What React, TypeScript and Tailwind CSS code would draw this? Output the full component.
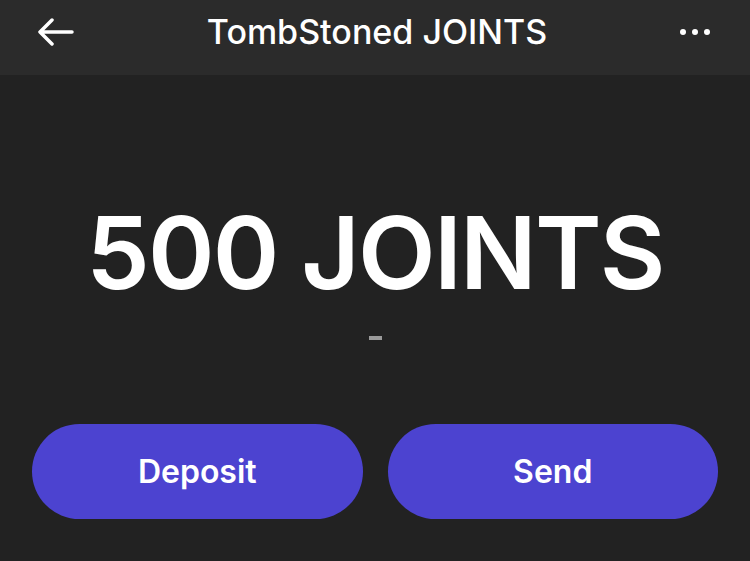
export default function App() {
  return (
    <div className="w-[750px] h-[561px] bg-[#222222] flex flex-col font-['Inter',sans-serif] text-white overflow-hidden">
      <header className="h-[75px] bg-[#2b2b2b] flex items-center justify-between px-[38px]">
        <svg width="36" height="28" viewBox="0 0 36 28" fill="none" className="mt-[-12px]">
          <path d="M34 14H3M14 2L2 14l12 12" stroke="white" strokeWidth="3.5" strokeLinecap="round" strokeLinejoin="round" />
        </svg>
        <h1 className="text-[34px] font-medium mt-[-12px]">TombStoned JOINTS</h1>
        <div className="flex gap-[6px] mt-[-12px] mr-[2px]">
          <span className="w-[6px] h-[6px] rounded-full bg-white" />
          <span className="w-[6px] h-[6px] rounded-full bg-white" />
          <span className="w-[6px] h-[6px] rounded-full bg-white" />
        </div>
      </header>
      <main className="flex-1 flex flex-col items-center">
        <div className="mt-[127px] text-[101px] leading-[100px] font-semibold tracking-[-1.8px]">500 JOINTS</div>
        <div className="mt-[34px] w-[13px] h-[4px] bg-[#9a9a9a]" />
        <div className="mt-[84px] w-full px-[32px] grid grid-cols-2 gap-[25px]">
          <button className="h-[95px] rounded-full bg-[#4c43d0] text-[32px] font-semibold">Deposit</button>
          <button className="h-[95px] rounded-full bg-[#4c43d0] text-[32px] font-semibold">Send</button>
        </div>
      </main>
    </div>
  )
}
